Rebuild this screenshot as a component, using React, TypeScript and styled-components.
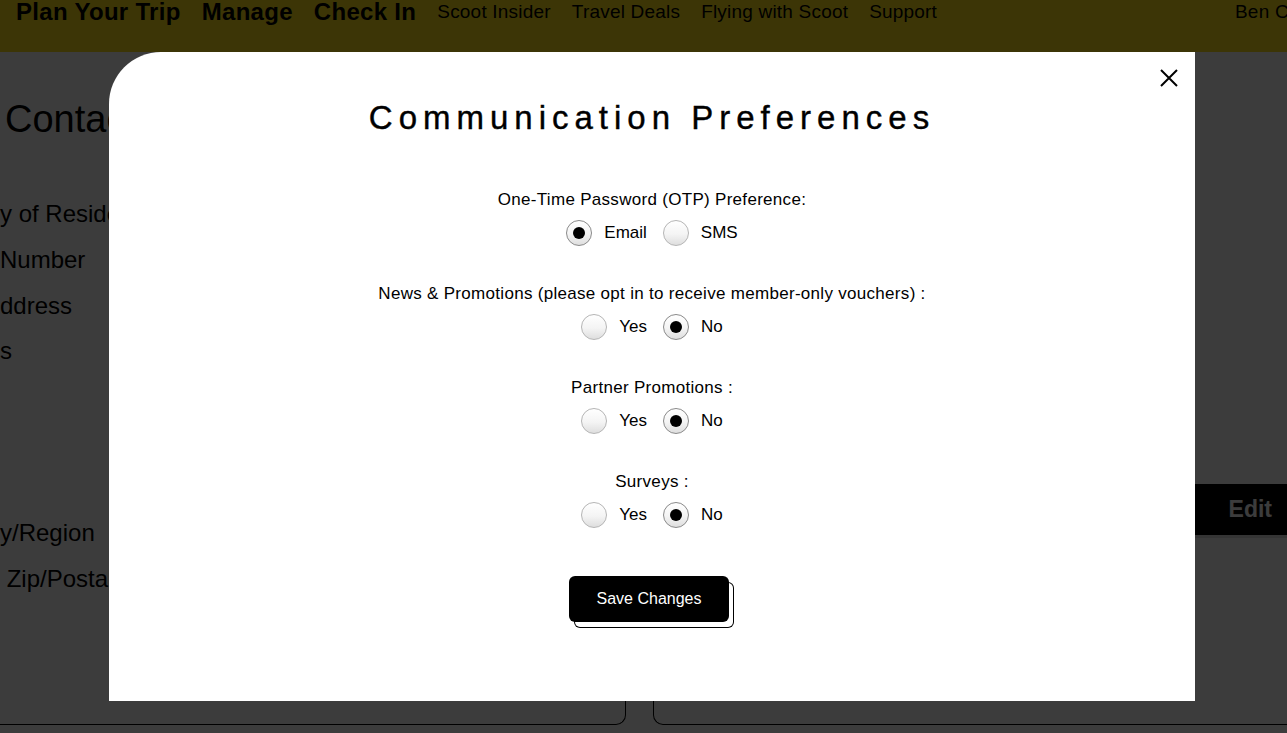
import React from "react";
import styled, { createGlobalStyle } from "styled-components";

const GlobalStyle = createGlobalStyle`
  html, body {
    margin: 0;
    padding: 0;
    background: #ffffff;
    font-family: "Liberation Sans", Arial, sans-serif;
    color: #000;
    overflow: hidden;
  }
`;

const Page = styled.div`
  width: 1287px;
  height: 733px;
  display: flex;
  flex-direction: column;
  background: #ffffff;
`;

const Header = styled.header`
  height: 52px;
  background: #ffe21a;
  display: flex;
  align-items: flex-start;
  padding: 0 0 0 16px;
  gap: 21px;
  box-sizing: border-box;
`;

const NavMain = styled.span`
  font-size: 24px;
  font-weight: 700;
  line-height: 24px;
  letter-spacing: 0.3px;
`;

const NavSub = styled.span`
  font-size: 19px;
  line-height: 24px;
  letter-spacing: 0.2px;
`;

const NavUser = styled(NavSub)`
  margin-left: auto;
  white-space: nowrap;
  width: 52px;
  overflow: hidden;
`;

const Body = styled.div`
  flex: 1;
  display: grid;
  grid-template-columns: 626px 1fr;
  column-gap: 27px;
`;

const LeftCard = styled.div`
  border-right: 1px solid #000;
  border-bottom: 1px solid #000;
  border-bottom-right-radius: 10px;
  height: 673px;
  box-sizing: border-box;
  padding-top: 45px;
`;

const Heading = styled.h2`
  margin: 0 0 50px 5px;
  font-size: 38px;
  font-weight: 400;
  line-height: 44px;
`;

const Label = styled.div<{ $gap?: number }>`
  font-size: 24px;
  line-height: 45.8px;
  white-space: nowrap;
  margin-top: ${(p) => p.$gap ?? 0}px;
`;

const RightCol = styled.div`
  display: flex;
  flex-direction: column;
  height: 673px;
`;

const EditBar = styled.div`
  margin-top: 432px;
  height: 51px;
  background: #000;
  color: #fff;
  display: flex;
  align-items: center;
  justify-content: flex-end;
  padding-right: 15px;
  font-size: 23px;
  font-weight: 700;
  border-bottom: 3px solid #e2e2e2;
`;

const RightCard = styled.div`
  flex: 1;
  margin-top: 2px;
  border-left: 1px solid #000;
  border-bottom: 1px solid #000;
  border-bottom-left-radius: 10px;
`;

const Overlay = styled.div`
  position: fixed;
  inset: 0;
  background: rgba(0, 0, 0, 0.765);
`;

const Modal = styled.div`
  position: fixed;
  left: 109px;
  top: 52px;
  width: 1086px;
  height: 649px;
  background: #fff;
  border-top-left-radius: 52px;
  display: flex;
  flex-direction: column;
  align-items: center;
  padding-top: 44px;
  box-sizing: border-box;
`;

const Close = styled.button`
  position: absolute;
  top: 17px;
  right: 17px;
  width: 18px;
  height: 18px;
  padding: 0;
  border: none;
  background: none;
  cursor: pointer;
`;

const Title = styled.h1`
  margin: 0 0 50px;
  font-size: 33px;
  line-height: 44px;
  font-weight: 400;
  letter-spacing: 6px;
  -webkit-text-stroke: 0.4px #000;
`;

const Section = styled.div`
  display: flex;
  flex-direction: column;
  align-items: center;
  gap: 10px;
  margin-bottom: 38px;
`;

const Question = styled.div`
  font-size: 17px;
  line-height: 20px;
  letter-spacing: 0.3px;
`;

const Options = styled.div`
  display: flex;
  align-items: center;
  gap: 16px;
  height: 26px;
`;

const Option = styled.label`
  display: flex;
  align-items: center;
  gap: 12px;
  font-size: 17px;
  cursor: pointer;
`;

const Radio = styled.span<{ $checked: boolean }>`
  width: 26px;
  height: 26px;
  border-radius: 50%;
  box-sizing: border-box;
  border: 1px solid ${(p) => (p.$checked ? "#8a8a8a" : "#b5b5b5")};
  background: linear-gradient(180deg, #ffffff 0%, #f4f4f4 55%, #dedede 100%);
  display: flex;
  align-items: center;
  justify-content: center;

  &::after {
    content: "";
    width: 12px;
    height: 12px;
    border-radius: 50%;
    background: #000;
    display: ${(p) => (p.$checked ? "block" : "none")};
  }
`;

const SaveButton = styled.button`
  margin: 10px 6px 0 0;
  width: 160px;
  height: 46px;
  border: none;
  border-radius: 6px;
  background: #000;
  color: #fff;
  font-family: "Liberation Sans", Arial, sans-serif;
  font-size: 16px;
  box-shadow: 5px 6px 0 -1px #fff, 5px 6px 0 0 #000;
  cursor: pointer;
`;

type Pref = {
  question: string;
  options: string[];
  selected: string;
};

const prefs: Pref[] = [
  { question: "One-Time Password (OTP) Preference:", options: ["Email", "SMS"], selected: "Email" },
  {
    question: "News & Promotions (please opt in to receive member-only vouchers) :",
    options: ["Yes", "No"],
    selected: "No",
  },
  { question: "Partner Promotions :", options: ["Yes", "No"], selected: "No" },
  { question: "Surveys :", options: ["Yes", "No"], selected: "No" },
];

const App = () => (
  <>
    <GlobalStyle />
    <Page>
      <Header>
        <NavMain>Plan Your Trip</NavMain>
        <NavMain>Manage</NavMain>
        <NavMain>Check In</NavMain>
        <NavSub>Scoot Insider</NavSub>
        <NavSub>Travel Deals</NavSub>
        <NavSub>Flying with Scoot</NavSub>
        <NavSub>Support</NavSub>
        <NavUser>Ben Chan</NavUser>
      </Header>
      <Body>
        <LeftCard>
          <Heading>Contact Details</Heading>
          <Label>y of Residence</Label>
          <Label> Number</Label>
          <Label>ddress</Label>
          <Label>s</Label>
          <Label $gap={136}>y/Region</Label>
          <Label>&nbsp;Zip/Postal Code</Label>
        </LeftCard>
        <RightCol>
          <EditBar>Edit</EditBar>
          <RightCard />
        </RightCol>
      </Body>
    </Page>
    <Overlay />
    <Modal>
      <Close aria-label="Close">
        <svg width="18" height="18" viewBox="0 0 18 18">
          <path d="M1 1 L17 17 M17 1 L1 17" stroke="#000" strokeWidth="2" />
        </svg>
      </Close>
      <Title>Communication Preferences</Title>
      {prefs.map((p) => (
        <Section key={p.question}>
          <Question>{p.question}</Question>
          <Options>
            {p.options.map((o) => (
              <Option key={o}>
                <Radio $checked={o === p.selected} />
                {o}
              </Option>
            ))}
          </Options>
        </Section>
      ))}
      <SaveButton>Save Changes</SaveButton>
    </Modal>
  </>
);

export default App;
